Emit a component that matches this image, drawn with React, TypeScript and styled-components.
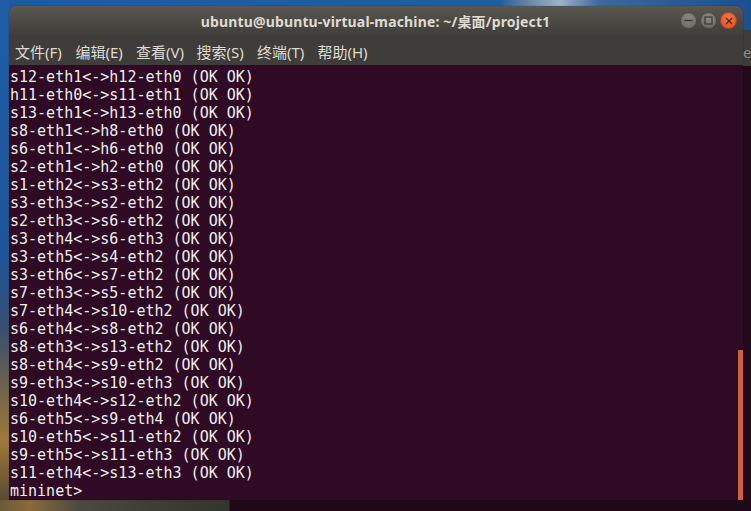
import React from "react";
import styled, { createGlobalStyle } from "styled-components";

const Global = createGlobalStyle`
  html, body { margin: 0; padding: 0; background: #1d5a9e; overflow: hidden; }
  * { box-sizing: border-box; }
`;

const Desktop = styled.div`
  position: relative;
  width: 751px;
  height: 511px;
  overflow: hidden;
  background:
    linear-gradient(to right, #6b5a3a 0px, #8a6a3a 30px, #4a4a42 80px, #3c3d35 160px, #34362e 229px, #1f0818 230px) 0 500px / 751px 11px no-repeat,
    linear-gradient(to bottom, #3d3c38 0, #3d3c38 36px, #220a1b 36px) 743px 30px / 8px 481px no-repeat,
    linear-gradient(to bottom, #1f5da3 0px, #1e5597 260px, #3a4f6e 330px, #7a6845 400px, #a07a3a 440px, #5b4a35 500px) 0 0 / 9px 511px no-repeat,
    linear-gradient(to right, #1c5aa0 0px, #235e9c 500px, #6d87a6 530px, #9fb3c9 560px, #3d6899 600px, #1b4f8e 751px);
  font-family: "Noto Sans", "Noto Sans CJK SC", sans-serif;
`;

const Ghost = styled.span`
  position: absolute;
  left: 743px;
  top: 42px;
  font-size: 15px;
  color: #8f8c85;
  font-family: "Noto Sans", sans-serif;
`;

const Window = styled.div`
  margin: 6px 0 0 9px;
  width: 734px;
  height: 494px;
  display: flex;
  flex-direction: column;
  border-radius: 7px 7px 0 0;
  overflow: hidden;
  box-shadow: 0 0 1px rgba(0, 0, 0, 0.6);
`;

const TitleBar = styled.div`
  height: 29px;
  flex: none;
  display: flex;
  align-items: center;
  padding: 1px 6px 0 0;
  background: linear-gradient(to bottom, #5a5752, #4a4843 60%, #413f3b);
`;

const Title = styled.div`
  flex: 1;
  text-align: center;
  padding-left: 62px;
  font-weight: 700;
  font-size: 14px;
  letter-spacing: 0.15px;
  color: #dfdbd2;
  white-space: nowrap;
`;

const Buttons = styled.div`
  display: flex;
  gap: 3px;
  align-items: center;
  margin-top: -1px;
`;

const CircleBtn = styled.div<{ $close?: boolean }>`
  width: 17px;
  height: 17px;
  border-radius: 50%;
  display: flex;
  align-items: center;
  justify-content: center;
  border: 1px solid ${(p) => (p.$close ? "#b9431c" : "#4a4944")};
  background: ${(p) =>
    p.$close
      ? "radial-gradient(circle at 50% 35%, #f27a4c, #e45a27 70%)"
      : "radial-gradient(circle at 50% 35%, #8c8a84, #6e6d68 75%)"};
`;

const MenuBar = styled.div`
  height: 30px;
  flex: none;
  display: flex;
  align-items: center;
  padding: 3px 0 0 6px;
  background: #3e3d39;
`;

const MenuItem = styled.div`
  width: 60.5px;
  font-size: 15px;
  color: #dfdbd2;
  white-space: nowrap;
  font-family: "Noto Sans", "Noto Sans CJK SC", sans-serif;
`;

const Terminal = styled.div`
  flex: 1;
  display: flex;
  background: #2f0a24;
  min-height: 0;
`;

const Output = styled.pre`
  flex: 1;
  margin: 0;
  padding: 3px 0 0 1px;
  font-family: "DejaVu Sans Mono", monospace;
  font-size: 15px;
  line-height: 18px;
  color: #eeeeec;
`;

const Track = styled.div`
  width: 5px;
  display: flex;
  flex-direction: column;
  justify-content: flex-end;
`;

const Thumb = styled.div`
  height: 150px;
  background: #c9633b;
`;

const lines = [
  "s12-eth1<->h12-eth0 (OK OK)",
  "h11-eth0<->s11-eth1 (OK OK)",
  "s13-eth1<->h13-eth0 (OK OK)",
  "s8-eth1<->h8-eth0 (OK OK)",
  "s6-eth1<->h6-eth0 (OK OK)",
  "s2-eth1<->h2-eth0 (OK OK)",
  "s1-eth2<->s3-eth2 (OK OK)",
  "s3-eth3<->s2-eth2 (OK OK)",
  "s2-eth3<->s6-eth2 (OK OK)",
  "s3-eth4<->s6-eth3 (OK OK)",
  "s3-eth5<->s4-eth2 (OK OK)",
  "s3-eth6<->s7-eth2 (OK OK)",
  "s7-eth3<->s5-eth2 (OK OK)",
  "s7-eth4<->s10-eth2 (OK OK)",
  "s6-eth4<->s8-eth2 (OK OK)",
  "s8-eth3<->s13-eth2 (OK OK)",
  "s8-eth4<->s9-eth2 (OK OK)",
  "s9-eth3<->s10-eth3 (OK OK)",
  "s10-eth4<->s12-eth2 (OK OK)",
  "s6-eth5<->s9-eth4 (OK OK)",
  "s10-eth5<->s11-eth2 (OK OK)",
  "s9-eth5<->s11-eth3 (OK OK)",
  "s11-eth4<->s13-eth3 (OK OK)",
  "mininet>",
];

const menus = ["文件(F)", "编辑(E)", "查看(V)", "搜索(S)", "终端(T)", "帮助(H)"];

export default function App() {
  return (
    <Desktop>
      <Global />
      <Ghost>e</Ghost>
      <Window>
        <TitleBar>
          <Title>ubuntu@ubuntu-virtual-machine: ~/桌面/project1</Title>
          <Buttons>
            <CircleBtn>
              <svg width="9" height="9" viewBox="0 0 9 9">
                <line x1="0.5" y1="4.5" x2="8.5" y2="4.5" stroke="#3a3935" strokeWidth="1.3" />
              </svg>
            </CircleBtn>
            <CircleBtn>
              <svg width="9" height="9" viewBox="0 0 9 9">
                <rect x="1" y="1" width="7" height="7" fill="none" stroke="#3a3935" strokeWidth="1.2" />
              </svg>
            </CircleBtn>
            <CircleBtn $close>
              <svg width="8" height="8" viewBox="0 0 8 8">
                <path d="M1 1 L7 7 M7 1 L1 7" stroke="#4a2a1e" strokeWidth="1.3" />
              </svg>
            </CircleBtn>
          </Buttons>
        </TitleBar>
        <MenuBar>
          {menus.map((m) => (
            <MenuItem key={m}>{m}</MenuItem>
          ))}
        </MenuBar>
        <Terminal>
          <Output>{lines.join("\n")}</Output>
          <Track>
            <Thumb />
          </Track>
        </Terminal>
      </Window>
    </Desktop>
  );
}
